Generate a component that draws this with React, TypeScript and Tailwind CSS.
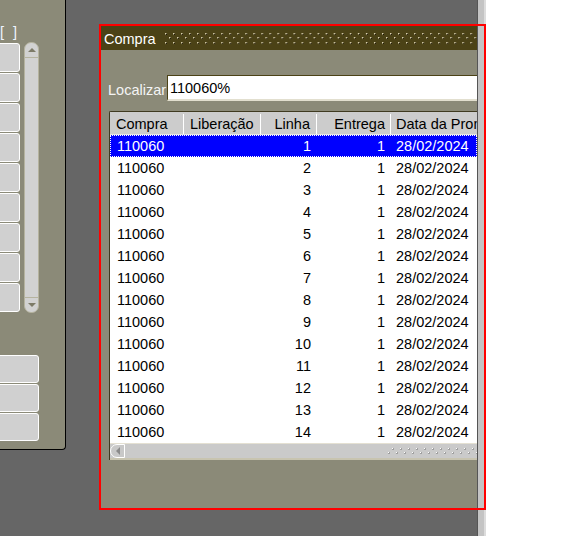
import React from "react";

function TitleGrip() {
  const dots: React.ReactNode[] = [];
  const ys = [7, 11, 16];
  for (let c = 0; c < 40; c++) {
    ys.forEach((y, r) => {
      const x = c * 8 + (r === 1 ? 5 : 1);
      dots.push(
        <g key={`${c}-${r}`}>
          <rect x={x} y={y} width={2} height={2} fill="#8a8060" />
          <rect x={x} y={y} width={1} height={1} fill="#e4dcb8" />
          <rect x={x + 1} y={y + 1} width={1} height={1} fill="#1a1400" />
        </g>
      );
    });
  }
  return (
    <svg className="h-[24px] flex-1" viewBox="0 0 312 24" preserveAspectRatio="xMinYMin slice">
      {dots}
    </svg>
  );
}

function ScrollGrip() {
  const dots: React.ReactNode[] = [];
  const ys = [4, 8];
  for (let c = 0; c < 12; c++) {
    ys.forEach((y, r) => {
      const x = c * 8 + (r === 1 ? 2 : 6);
      dots.push(
        <g key={`${c}-${r}`}>
          <rect x={x} y={y} width={2} height={2} fill="#a0a0a0" />
          <rect x={x} y={y} width={1} height={1} fill="#ffffff" />
        </g>
      );
    });
  }
  return (
    <svg className="h-[14px] w-[91px]" viewBox="0 0 91 14">
      {dots}
    </svg>
  );
}

const cols = [
  "w-[74px] shrink-0",
  "w-[77px] shrink-0",
  "w-[56px] shrink-0",
  "w-[74px] shrink-0",
  "flex-1 min-w-0",
];

export default function App() {
  const rows = Array.from({ length: 14 }, (_, i) => i + 1);
  return (
    <div className="relative flex h-[536px] w-[586px] overflow-hidden bg-white font-['Liberation_Sans',Arial,sans-serif] text-[14.5px]">
      {/* desktop area */}
      <div className="h-full w-[477px] shrink-0 bg-[#666666]">
        {/* left panel */}
        <div className="flex h-[450px] w-[66px] flex-col overflow-hidden rounded-br-[4px] border-b border-r border-black bg-[#8b8a78]">
          <div className="flex h-[42px] items-start pt-[24px] leading-[16px] text-[#eef4ff]">
            <span>[</span>
            <span className="ml-[9px]">]</span>
          </div>
          <div className="flex">
            <div className="flex w-[20px] flex-col gap-[1px] overflow-hidden pt-[1px]">
              {Array.from({ length: 9 }, (_, i) => (
                <div
                  key={i}
                  className="-ml-[3px] h-[29px] w-[23px] shrink-0 rounded-[3px] border border-white bg-[#d0d0d0]"
                />
              ))}
            </div>
            <div className="ml-[4px] flex h-[271px] w-[15px] flex-col justify-between rounded-[7px] border border-[#b5b39f] bg-[#d2d2d2]">
              <div className="flex h-[15px] items-center justify-center border-b border-[#b5b39f]">
                <div className="h-0 w-0 border-x-[4px] border-b-[4px] border-x-transparent border-b-[#7d7b68]" />
              </div>
              <div className="flex h-[15px] items-center justify-center border-t border-[#b5b39f]">
                <div className="h-0 w-0 border-x-[4px] border-t-[4px] border-x-transparent border-t-[#7d7b68]" />
              </div>
            </div>
          </div>
          <div className="mt-[42px] flex flex-col gap-[1px] overflow-hidden">
            {Array.from({ length: 3 }, (_, i) => (
              <div
                key={i}
                className="-ml-[3px] h-[28px] w-[42px] shrink-0 rounded-[3px] border border-white bg-[#d0d0d0]"
              />
            ))}
          </div>
        </div>
      </div>

      {/* right page strip */}
      <div className="h-full w-[1px] shrink-0 bg-[#555555]" />
      <div className="h-full w-[6px] shrink-0 bg-[#c4c4c4]" />
      <div className="h-full w-[2px] shrink-0 bg-[#dcdcdc]" />
      <div className="h-full flex-1 bg-white" />

      {/* window */}
      <div className="absolute left-[101px] top-[26px] flex h-[482px] w-[376px] flex-col overflow-hidden bg-[#8b8a78]">
        <div className="flex h-[24px] shrink-0 items-center bg-[#4b4216]">
          <span className="pl-[3px] pr-[8px] pt-[2px] leading-[16px] text-white">Compra</span>
          <TitleGrip />
        </div>

        <div className="mt-[25px] flex items-center">
          <span className="w-[66px] shrink-0 pl-[7px] pt-[3px] leading-[16px] text-[#f4f4f4]">Localizar</span>
          <div className="flex h-[26px] flex-1 items-center border-b-2 border-l border-t border-b-[#e2dfcf] border-l-[#4b4216] border-t-[#4b4216] bg-white pl-[2px] pt-[2px] text-black">
            110060%
          </div>
        </div>

        <div className="ml-[8px] mt-[10px] flex flex-col rounded-tl-[2px] border-l border-t border-[#3f3a20]">
          {/* header */}
          <div className="flex h-[23px] border-b border-[#e8e8e8] bg-[#cccccc] pt-[2px] leading-[20px] text-black">
            <div className={`${cols[0]} border-r border-white pl-[6px]`}>Compra</div>
            <div className={`${cols[1]} border-r border-white pl-[6px]`}>Liberação</div>
            <div className={`${cols[2]} border-r border-white pr-[6px] text-right`}>Linha</div>
            <div className={`${cols[3]} border-r border-white pr-[5px] text-right`}>Entrega</div>
            <div className={`${cols[4]} overflow-hidden whitespace-nowrap pl-[5px]`}>Data da Promessa</div>
          </div>
          {/* rows */}
          {rows.map((n) => {
            const sel = n === 1;
            return (
              <div
                key={n}
                className={`flex h-[22px] pt-[1px] leading-[21px] ${
                  sel
                    ? "bg-[#0000ff] text-white outline-1 -outline-offset-1 outline-dotted outline-white"
                    : "bg-white text-black"
                }`}
              >
                <div className={`${cols[0]} pl-[7px]`}>110060</div>
                <div className={cols[1]} />
                <div className={`${cols[2]} pr-[6px] text-right`}>{n}</div>
                <div className={`${cols[3]} pr-[6px] text-right`}>1</div>
                <div className={`${cols[4]} whitespace-nowrap pl-[5px]`}>28/02/2024</div>
              </div>
            );
          })}
          {/* horizontal scrollbar */}
          <div className="flex h-[15px] items-center border-t border-[#e4e0d2] bg-[#cacaca]">
            <div className="flex h-[14px] w-[15px] items-center justify-center rounded-l-[7px] border border-white bg-[#c8c8c8]">
              <div className="h-0 w-0 border-y-[4px] border-r-[4px] border-y-transparent border-r-[#8a8a8a]" />
            </div>
            <div className="flex-1" />
            <ScrollGrip />
          </div>
          <div className="h-[2px] bg-[#c8c4b0]" />
        </div>
      </div>

      {/* red highlight frame */}
      <div className="pointer-events-none absolute left-[99px] top-[24px] h-[486px] w-[387px] border-2 border-[#ff0000]" />
    </div>
  );
}
